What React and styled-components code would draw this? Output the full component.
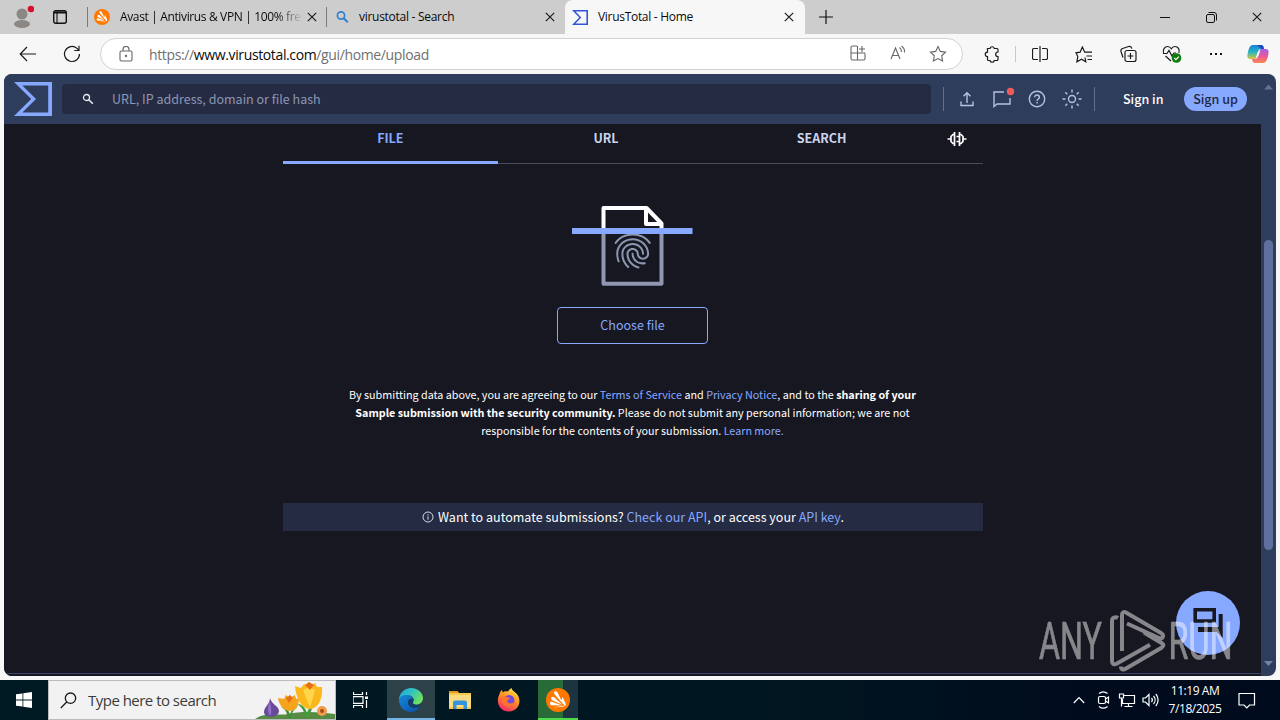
import styled, { createGlobalStyle } from "styled-components";
import { MdFingerprint } from "react-icons/md";

const App = () => {
  return (
    <>
      <GlobalStyle />
      <Desktop>
        <TabStrip />
        <Toolbar />
        <Viewport>
          <Page>
            <SiteHeader />
            <Home />
          </Page>
          <Scrollbar>
            <svg width="15" height="602" viewBox="0 0 15 602">
              <path d="M3 15.500h9L7.500 10.500z" fill="#667190" />
              <rect x="3" y="166" width="9" height="310" rx="4.500" fill="#60709e" />
              <path d="M3 587h9L7.500 592z" fill="#7481a8" />
            </svg>
          </Scrollbar>
          <ChatButton aria-label="Open chat">
            <svg width="32" height="32" viewBox="0 0 32 32">
              <path d="M3.200 2.800h19v11.200h-19z" fill="none" stroke="#181823" strokeWidth="3.600" />
              <path d="M26.700 7h4v24l-6-6H6v-5h20.700z" fill="#181823" />
            </svg>
          </ChatButton>
          <Watermark />
        </Viewport>
        <Taskbar />
      </Desktop>
    </>
  );
};

const AvastIcon = ({ size }) => (
  <svg width={size} height={size} viewBox="0 0 24 24">
    <circle cx="12" cy="12" r="12" fill="#ff7800" />
    <path
      d="M8.300 3.800c1.300-1.100 2.800-.4 3.400 1l5.500 11.400-8.400-9.800c-.8-.9-1.200-1.900-.5-2.600z"
      fill="#fff"
    />
    <path d="M5.400 9.600c.7-1.100 2-1.100 3-.2l8 7.400-9.900-4.300c-1.200-.6-1.700-1.800-1.100-2.900z" fill="#fff" />
    <path
      d="M4 15.200c.2-1.100 1.200-1.600 2.400-1.300l9.800 3.600-10.200-.2c-1.400 0-2.200-.9-2-2.100zM7 19.500l9-.8 2-.4c1.500-.3 2.300-1.600 1.500-3L16.500 9l-1.500 4 3.500 4.500z"
      fill="#fff"
    />
  </svg>
);

const SigmaLogo = ({ width, height, color }) => (
  <svg width={width} height={height} viewBox="0 1.320 24 21.360" preserveAspectRatio="none">
    <path
      d="M10.870 12L0 22.680h24V1.320H0zm10.730 8.520H5.280l8.637-8.448L5.280 3.480H21.600z"
      fill={color}
    />
  </svg>
);

const CloseIcon = () => (
  <svg width="10" height="10" viewBox="0 0 10 10">
    <path d="M.8.800l8.400 8.400M9.200.800L.8 9.200" stroke="#1b1b1b" strokeWidth="1.200" />
  </svg>
);

const TabStrip = () => (
  <Strip>
    <StripButton $width={44}>
      <svg width="24" height="26" viewBox="0 0 24 26">
        <circle cx="12" cy="10" r="5.500" fill="#8b8785" />
        <ellipse cx="12" cy="20" rx="8" ry="4" fill="#8b8785" />
        <circle cx="21" cy="5" r="3.300" fill="#d80f2c" />
      </svg>
    </StripButton>
    <StripButton $width={32}>
      <svg width="14" height="14" viewBox="0 0 14 14">
        <rect x=".7" y=".7" width="12.600" height="12.600" rx="2" fill="none" stroke="#111" strokeWidth="1.400" />
        <path d="M1 2.500h12" stroke="#111" strokeWidth="2" />
        <path d="M4 3v10" stroke="#111" strokeWidth="1.100" />
      </svg>
    </StripButton>
    <StripRule $gap={11} />
    <Tab $width={238} $pad={6} $end={10}>
      <AvastIcon size={16} />
      <TabTitle $fade $space={-0.36}>
        Avast | Antivirus &amp; VPN | 100% fre
      </TabTitle>
      <CloseIcon />
    </Tab>
    <StripRule />
    <Tab $width={238} $pad={8} $end={10}>
      <svg width="16" height="16" viewBox="0 0 16 16">
        <circle cx="6" cy="6.500" r="3.600" fill="none" stroke="#2f80cf" strokeWidth="1.700" />
        <path d="M8.700 9.200l4 4" stroke="#2f80cf" strokeWidth="2" />
      </svg>
      <TabTitle $space={-0.28} $shift={-2}>
        virustotal - Search
      </TabTitle>
      <CloseIcon />
    </Tab>
    <Tab $width={240} $pad={7} $end={11} $active>
      <SigmaLogo width={16} height={15} color="#3155d9" />
      <TabTitle $space={-0.3}>VirusTotal - Home</TabTitle>
      <CloseIcon />
    </Tab>
    <StripButton $width={42}>
      <svg width="14" height="14" viewBox="0 0 14 14">
        <path d="M7 0v14M0 7h14" stroke="#111" strokeWidth="1.200" />
      </svg>
    </StripButton>
    <WindowControls>
      <StripButton $width={46}>
        <svg width="10" height="10" viewBox="0 0 10 10">
          <path d="M0 5.500h10" stroke="#111" />
        </svg>
      </StripButton>
      <StripButton $width={46}>
        <svg width="11" height="11" viewBox="0 0 11 11" fill="none" stroke="#111">
          <rect x=".5" y="2.500" width="8" height="8" rx="1.500" />
          <path d="M2.500.500H8a2.500 2.500 0 0 1 2.500 2.500v5.500" />
        </svg>
      </StripButton>
      <StripButton $width={46}>
        <CloseIcon />
      </StripButton>
    </WindowControls>
  </Strip>
);

const Toolbar = () => (
  <Bar>
    <ToolButton $width={56}>
      <svg width="18" height="16" viewBox="0 0 18 16">
        <path d="M8 1L1.200 8 8 15M1.200 8H17" />
      </svg>
    </ToolButton>
    <ToolButton $width={32}>
      <svg width="18" height="18" viewBox="0 0 18 18">
        <path d="M16.500 9A7.500 7.500 0 1 1 14 3.400L16 5.300M16 .800v4.700h-4.700" />
      </svg>
    </ToolButton>
    <AddressBar>
      <svg width="14" height="16" viewBox="0 0 14 16">
        <rect x="1" y="5" width="12" height="10" rx="1.500" />
        <path d="M4 5V3.500a3 3 0 0 1 6 0V5" />
        <circle cx="7" cy="10" r=".6" fill="#555" />
      </svg>
      <Url>
        https://<b>www.virustotal.com</b>/gui/home/upload
      </Url>
      <AddressIcons>
        <svg width="16" height="16" viewBox="0 0 16 16">
          <path d="M7 1H2.500A1.500 1.500 0 0 0 1 2.500v11A1.500 1.500 0 0 0 2.500 15h11a1.500 1.500 0 0 0 1.500-1.500V8.500M7.500 1v14M1 8h14M12 1v6M9 4h6" />
        </svg>
        <svg width="16" height="16" viewBox="0 0 16 16">
          <path d="M1 14L5.500 3 10 14M2.500 10.500h6M9.500 2.500a5 5 0 0 1 2 4.500M11.500 1a7 7 0 0 1 3 6.500" />
        </svg>
        <svg width="18" height="18" viewBox="0 0 18 18">
          <path d="M9 1.500l2.300 4.900 5.200.7-3.800 3.700.9 5.300L9 13.600l-4.600 2.500.9-5.300L1.500 7.100l5.200-.7z" />
        </svg>
      </AddressIcons>
    </AddressBar>
    <ToolButton $width={58}>
      <svg width="17" height="17" viewBox="0 0 17 17">
        <path d="M3.500 2.500H6a2.200 2.200 0 0 1 4.300 0H13a1 1 0 0 1 1 1V6a2.200 2.200 0 0 0 0 4.700V13.500a1 1 0 0 1-1 1h-2.700a2.200 2.200 0 0 1-4.300 0H4.500a1 1 0 0 1-1-1v-2.800a2.200 2.200 0 0 1 0-4.500z" />
      </svg>
    </ToolButton>
    <ToolRule />
    <ToolButton $width={44}>
      <svg width="16" height="16" viewBox="0 0 16 16">
        <path d="M6 2.500H2A1.500 1.500 0 0 0 .5 4v8A1.500 1.500 0 0 0 2 13.500h4M10 2.500h4A1.500 1.500 0 0 1 15.500 4v8a1.500 1.500 0 0 1-1.500 1.500h-4M8 0v16" />
      </svg>
    </ToolButton>
    <ToolButton $width={44}>
      <svg width="18" height="17" viewBox="0 0 18 17">
        <path d="M10 11.500l.8 4.300-4.300-2.500-4.600 2.500.9-5.300L1 6.800l4.100-.6L7.400 1l2.300 5.200H17M11.500 10H17M12.500 13.500H17" />
      </svg>
    </ToolButton>
    <ToolButton $width={44}>
      <svg width="18" height="18" viewBox="0 0 18 18">
        <rect x="6" y="5.500" width="11" height="11" rx="2" />
        <path d="M11.500 8v6M8.500 11h6M4 12.500L2 6.500a2.500 2.500 0 0 1 1.600-3l6-2a2.500 2.500 0 0 1 3 1.500l.2.600" />
      </svg>
    </ToolButton>
    <ToolButton $width={44}>
      <svg width="20" height="18" viewBox="0 0 20 18">
        <path d="M1.500 8C.5 4.500 3 1.500 5.500 1.500c2 0 3 1 3.800 2.300C10 2.500 11.300 1.500 13 1.500c3 0 5 3 3.900 6.500M1 8.500h4l2-3 3 5.500 2-3h2M3.500 11L9 16" />
        <circle cx="14.500" cy="13" r="4.800" fill="#107c10" stroke="none" />
        <path d="M12.300 13l1.600 1.600 3-3" stroke="#fff" />
      </svg>
    </ToolButton>
    <ToolButton $width={44}>
      <svg width="14" height="4" viewBox="0 0 14 4">
        <path d="M1 1h2v2H1zM6 1h2v2H6zM11 1h2v2h-2z" fill="#111" stroke="none" />
      </svg>
    </ToolButton>
    <ToolButton $width={40}>
      <svg width="22" height="20" viewBox="0 0 22 20">
        <defs>
          <linearGradient id="cpA" x1="0" y1="0" x2="0" y2="1">
            <stop offset="0" stopColor="#1f7fdd" />
            <stop offset=".5" stopColor="#25b4c4" />
            <stop offset="1" stopColor="#d9c63b" />
          </linearGradient>
          <linearGradient id="cpB" x1="0" y1="0" x2="0" y2="1">
            <stop offset="0" stopColor="#a45fe8" />
            <stop offset=".5" stopColor="#e9569b" />
            <stop offset="1" stopColor="#f88a4d" />
          </linearGradient>
        </defs>
        <path d="M6 1h8c2 0 2.500 1.500 3 4h-3c-2 0-2.500 1-3 3l-1.500 5C9 15 8 15 6 15H3c-3 0-3-3-2-7 1-4 2-7 5-7z" fill="url(#cpA)" stroke="none" />
        <path d="M16 19H8c-2 0-2.500-1.500-3-4h3c2 0 2.500-1 3-3l1.500-5C13 5 14 5 16 5h3c3 0 3 3 2 7-1 4-2 7-5 7z" fill="url(#cpB)" stroke="none" />
        <path d="M10 1h4c2 0 2.500 1.500 3 4h-3z" fill="#1a4fbf" stroke="none" />
        <path d="M10.800 8l2.500-1-2.100 5.500-2.200.5z" fill="#f7f7f7" stroke="none" />
      </svg>
    </ToolButton>
  </Bar>
);

const SiteHeader = () => (
  <Header>
    <SigmaLogo width={38} height={34} color="#87a8ff" />
    <SearchBox>
      <svg width="12" height="12" viewBox="0 0 12 12">
        <circle cx="4.500" cy="4.500" r="3" fill="none" stroke="#e8ebf5" strokeWidth="1.300" />
        <path d="M6.800 6.800l4 4" stroke="#e8ebf5" strokeWidth="1.600" />
      </svg>
      <span>URL, IP address, domain or file hash</span>
    </SearchBox>
    <HeaderRule />
    <HeaderIcons>
      <svg width="20" height="20" viewBox="0 0 20 20">
        <path d="M4 12.500V16.500h12V12.500M10 14V4M6.500 7.300L10 3.800l3.500 3.500" />
      </svg>
      <svg width="20" height="20" viewBox="0 0 20 20">
        <path d="M12 3H2v14.500L5 15h13V9" />
        <circle cx="18.500" cy="2.500" r="3.700" fill="#ef5a5a" stroke="none" />
      </svg>
      <svg width="20" height="20" viewBox="0 0 20 20">
        <circle cx="10" cy="10" r="7.700" />
        <path d="M7.700 8.200c0-3 4.700-2.900 4.700 0 0 1.800-2.300 1.900-2.300 3.800M10.100 13v1.600" />
      </svg>
      <svg width="20" height="20" viewBox="0 0 20 20">
        <circle cx="10" cy="10" r="3.500" />
        <path d="M10 .500v3M10 16.500v3M.5 10h3M16.500 10h3M3.300 3.300l2 2M14.700 14.700l2 2M3.300 16.700l2-2M14.700 5.300l2-2" />
      </svg>
    </HeaderIcons>
    <HeaderRule />
    <SignIn>Sign in</SignIn>
    <SignUp>Sign up</SignUp>
  </Header>
);

const Home = () => (
  <Main>
    <Column>
      <Nav>
        <NavItem $active>FILE</NavItem>
        <NavItem>URL</NavItem>
        <NavItem>SEARCH</NavItem>
        <NavExtra>
          <svg width="20" height="16" viewBox="0 0 20 16">
            <path
              d="M7.500 1v14M12.500 1v14M7.500 3.500H6L4 5.500v5l2 2h1.500M12.500 3.500H14L16 5.500v5l-2 2h-1.500M.5 8H4M16 8h3.500M9.500 5.500h3M9.500 10.500h3"
              fill="none"
              stroke="#fff"
              strokeWidth="1.700"
            />
          </svg>
        </NavExtra>
      </Nav>
      <FileArt>
        <svg width="121" height="80" viewBox="0 0 121 80" fill="none" strokeLinejoin="round" strokeWidth="4">
          <path d="M31.500 25v52.800H89.500V25" stroke="#8f98b0" />
          <path d="M31.500 25V2h43l15 15.500V25" stroke="#fff" />
          <path d="M74 3v15h14" stroke="#fff" />
          <g transform="translate(36.700 18.500)" color="#8c96b0">
            <MdFingerprint size={48} strokeWidth={0} />
          </g>
          <path d="M0 22h120.500v6H0z" fill="#87a8ff" />
        </svg>
      </FileArt>
      <ChooseButton>Choose file</ChooseButton>
      <Terms>
        By submitting data above, you are agreeing to our <a>Terms of Service</a> and{" "}
        <a>Privacy Notice</a>, and to the <b>sharing of your</b>
        <br />
        <b>Sample submission with the security community.</b> Please do not submit any personal
        information; we are not
        <br />
        responsible for the contents of your submission. <a>Learn more.</a>
      </Terms>
      <ApiNote>
        <svg width="12" height="12" viewBox="0 0 12 12" fill="none" stroke="#d5daea">
          <circle cx="6" cy="6" r="5" />
          <path d="M6 5.300v3.400M6 3.200v1.200" />
        </svg>
        <p>
          Want to automate submissions? <a>Check our API</a>, or access your <a>API key</a>.
        </p>
      </ApiNote>
    </Column>
    <FooterLine />
  </Main>
);

const Watermark = () => (
  <Stamp>
    <svg width="236" height="66" viewBox="0 0 236 66">
      <text x="1" y="49" textLength="63" lengthAdjust="spacingAndGlyphs">
        ANY
      </text>
      <text x="130.500" y="49" textLength="64" lengthAdjust="spacingAndGlyphs">
        RUN
      </text>
      <path
        d="M80 8c-2.500-1.500-6-.5-6 3v40c0 3 2 4 4.500 2.700l33.500-19M84 41V5c0-3 2-3.500 4-2.500L123 23c3.500 2 2 6-1.500 5.300L89 13.500M106 22.500l17.500 10.500c2.500 1.500 2.500 3.200 0 4.700L88 58.500c-3 1.800-5 1-5-2"
        fill="none"
        stroke="#fff"
        strokeWidth="4"
      />
    </svg>
  </Stamp>
);

const Taskbar = () => (
  <TaskRow>
    <TaskCell $width={48}>
      <svg width="16" height="16" viewBox="0 0 16 16" fill="#fff">
        <path d="M0 2.300L6.500 1.400v6.200H0zM7.300 1.300L16 0v7.600H7.300zM0 8.400h6.500v6.200L0 13.700zM7.300 8.400H16V16l-8.700-1.300z" />
      </svg>
    </TaskCell>
    <TaskSearch>
      <svg width="17" height="17" viewBox="0 0 17 17" fill="none" stroke="#1a1a1a" strokeWidth="1.300">
        <circle cx="10.500" cy="6.200" r="5.200" />
        <path d="M6.700 10L.8 16" />
      </svg>
      <span>Type here to search</span>
      <Flowers />
    </TaskSearch>
    <TaskCell $width={51}>
      <svg width="18" height="16" viewBox="1.500 0 18 16" fill="none" stroke="#fff" strokeWidth="1.200">
        <path d="M2 0v2.500h9V0M2 16v-2.500h9V16M1.500 4.600h10v6.800h-10zM15 0v3M15 8v8" />
        <path d="M13.500 4.500h3v2.500h-3z" fill="#fff" stroke="none" />
      </svg>
    </TaskCell>
    <TaskCell $width={48} $back="#2c4148" $line="#76b4e8">
      <svg width="24" height="24" viewBox="0 0 24 24">
        <defs>
          <linearGradient id="edgeTop" x1="0" y1="0" x2="1" y2=".5">
            <stop offset="0" stopColor="#22a6e4" />
            <stop offset=".5" stopColor="#2fc1c4" />
            <stop offset="1" stopColor="#6ee063" />
          </linearGradient>
          <linearGradient id="edgeLow" x1="0" y1="0" x2="1" y2="1">
            <stop offset="0" stopColor="#1589d9" />
            <stop offset="1" stopColor="#0c4fa6" />
          </linearGradient>
        </defs>
        <path d="M0 12C0 5 5.500 0 12 0s12 4.500 12 10c0 4-3 6.500-6.500 6.500-3 0-4-1.200-3.400-2.300 1.700-2.400.4-6.200-4-6.700C5.500 7.300 1.500 9 0 12z" fill="url(#edgeTop)" />
        <path d="M0 12C.5 8.500 4.500 6.500 8.500 7c3 .4 5 2 5.500 4-3-1-5 1-5 3.500 0 4 5.500 7.500 12 4C19 21.500 16 24 12 24 5 24 0 18.500 0 12z" fill="url(#edgeLow)" />
        <path d="M9 14.500c0-2.500 2-4.500 5-3.500.5 1.500 0 2.800-.5 3.800-.4 2 5 3.500 8.500 1.200-1 2.500-3.500 4-6.500 4-3.500 0-6.500-2.500-6.500-5.500z" fill="#103f70" />
      </svg>
    </TaskCell>
    <TaskCell $width={49}>
      <svg width="22" height="20" viewBox="0 0 22 20">
        <path d="M0 1h8l2 2h12v16H0z" fill="#f8c94c" />
        <path d="M0 1h8l2 2H0z" fill="#e49b1e" />
        <path d="M0 5h22v12H0z" fill="#fbdb82" />
        <path d="M4 19v-6.500A2 2 0 0 1 6 10.500h10a2 2 0 0 1 2 2V19h-3.500v-4h-7v4z" fill="#3594dc" />
      </svg>
    </TaskCell>
    <TaskCell $width={49}>
      <svg width="24" height="24" viewBox="0 0 24 24">
        <defs>
          <linearGradient id="fox" x1=".8" y1="0" x2=".3" y2="1">
            <stop offset="0" stopColor="#ffe94a" />
            <stop offset=".45" stopColor="#ff9422" />
            <stop offset="1" stopColor="#f5286d" />
          </linearGradient>
        </defs>
        <path d="M2.500 6C3 4 4 2.500 5 2l.8 2.500C7 3.500 9 3 11 3.500 12 2 13 .8 14.500 0c.5 2.500 3 3.500 5 5.500 6 6.500 2.500 18-7.500 18C3 23.500-2 14.500 2.500 6z" fill="url(#fox)" />
        <circle cx="12" cy="12.500" r="5.500" fill="#7549dc" />
        <path d="M5 8.500c2-1.200 4-.5 5.200.7l3 .8c-.5 1.500-2 1.500-3 2.500 0 3 4 4 7 1.500-1 4-4 5-6.500 4.500C6.500 18 4 13.500 5 8.500z" fill="#ff752e" />
      </svg>
    </TaskCell>
    <AvastCell>
      <AvastIcon size={24} />
    </AvastCell>
    <Tray>
      <svg width="18" height="8" viewBox="-1 0 18 8">
        <path d="M.8 7L6 1.500 11.200 7" />
      </svg>
      <svg width="16" height="18" viewBox="0 0 16 18">
        <rect x="2.500" y="5.500" width="7" height="7" rx="1.500" />
        <path d="M9.500 8l3-2v6l-3-2M3 2.500c2.500-2 6-2 8.500 0M3 15.500c2.500 2 6 2 8.500 0" />
      </svg>
      <svg width="18" height="16" viewBox="0 0 18 16">
        <path d="M5 3.500h11.500v8H4.500V7M1.500 2h4v4h-4zM10.500 11.500v3M6.500 14.500h8M3.500 6v8.500" />
      </svg>
      <svg width="18" height="14" viewBox="0 0 18 14">
        <path d="M1 5h2.500L7 1.500v11L3.500 9H1zM9.500 5a3 3 0 0 1 0 4M11.500 3a6 6 0 0 1 0 8M13.800 1a9 9 0 0 1 0 12" />
      </svg>
      <Clock>
        <span>11:19 AM</span>
        <span>7/18/2025</span>
      </Clock>
      <svg width="18" height="17" viewBox="0 0 18 17">
        <path d="M1 1.500h15.500v11.500H11.500L8.800 15.800 6 13H1z" />
      </svg>
    </Tray>
  </TaskRow>
);

const Flowers = () => (
  <svg width="80" height="38" viewBox="0 0 80 38">
    <path d="M0 38c12-8 24-3 33-5 14-3 30-2 47 0v5z" fill="#568b43" />
    <path d="M15 17c1 6 9 8 9 13 0 7-15 8-15 1 0-5 6-8 6-14z" fill="#684a9b" />
    <path d="M15 19c0 6 3 11 0 16-3-5-2-9 0-16z" fill="#9171c4" />
    <path d="M33 37c-1-6-3-9-7-11 5 0 8 3 9 8 1-5 4-8 7-8-4 3-6 7-6 11z" fill="#3f8c3b" />
    <path d="M50 36c-1-7-4-11-8-13 6 0 9 5 10 9 2-6 5-9 10-10-5 4-7 9-7 14z" fill="#479b3d" />
    <path d="M23 17l6 1 2-4 4 3 5-3 1 4 3-1c0 8-3 13-9 13s-11-6-12-13z" fill="#f4a51d" />
    <path d="M40 5l6 2 3-4 5 3 6-4 2 4 5 0c1 12-4 22-12 22S41 18 40 5z" fill="#fbb81d" />
    <path d="M48 9l6-3 6 3-5 18z" fill="#ffd64a" />
    <path d="M50 4l4-3 5 3-4 5zM31 17l4-3 3 3-4 5z" fill="#e86f17" />
    <circle cx="67" cy="30" r="5" fill="#f19b4b" />
    <circle cx="67" cy="30" r="2" fill="#a84a1b" />
  </svg>
);

const GlobalStyle = createGlobalStyle`
  * {
    box-sizing: border-box;
  }

  body {
    margin: 0;
    overflow: hidden;
    font-family: "Open Sans", "Noto Sans", sans-serif;
  }

  svg {
    display: block;
    flex: none;
  }

  p {
    margin: 0;
  }

  button {
    font: inherit;
    border: 0;
    padding: 0;
    background: none;
  }
`;

const Desktop = styled.div`
  width: 1280px;
  height: 720px;
  display: flex;
  flex-direction: column;
  background: #f7f7f7;
`;

const Strip = styled.div`
  height: 34px;
  display: flex;
  align-items: center;
  background: #cdcdcd;
`;

const StripButton = styled.button`
  width: ${({ $width }) => $width}px;
  height: 34px;
  display: flex;
  align-items: center;
  justify-content: center;
`;

const StripRule = styled.span`
  width: 1px;
  height: 20px;
  margin-left: ${({ $gap = 0 }) => $gap}px;
  background: #7c7c7c;
`;

const Tab = styled.div`
  width: ${({ $width }) => $width}px;
  height: 34px;
  display: flex;
  align-items: center;
  gap: 10px;
  padding: 0 ${({ $end }) => $end}px 0 ${({ $pad }) => $pad}px;
  border-radius: 8px 8px 0 0;
  background: ${({ $active }) => ($active ? "#f7f7f7" : "transparent")};
`;

const TabTitle = styled.span`
  flex: 1;
  white-space: nowrap;
  margin-left: ${({ $shift = 0 }) => $shift}px;
  margin-right: -4px;
  padding-bottom: 1px;
  color: #0a0a0a;
  font-size: 12px;
  letter-spacing: ${({ $space }) => $space}px;
  mask-image: ${({ $fade }) =>
    $fade ? "linear-gradient(90deg, #000 87%, transparent 101%)" : "none"};
`;

const WindowControls = styled.div`
  margin-left: auto;
  display: flex;
`;

const Bar = styled.div`
  height: 40px;
  display: flex;
  align-items: center;
  background: #f7f7f7;
`;

const ToolButton = styled.button`
  width: ${({ $width }) => $width}px;
  height: 32px;
  display: flex;
  align-items: center;
  justify-content: center;

  svg {
    fill: none;
    stroke: #1b1b1b;
    stroke-width: 1.2;
  }
`;

const AddressBar = styled.div`
  width: 863px;
  height: 32px;
  margin-left: 12px;
  padding: 0 15px 0 18px;
  display: flex;
  align-items: center;
  gap: 16px;
  border: 1px solid #d2d2d6;
  border-radius: 16px;
  background: #fff;

  svg {
    fill: none;
    stroke: #666;
    stroke-width: 1.1;
  }
`;

const Url = styled.span`
  font-size: 14px;
  letter-spacing: -0.37px;
  color: #707070;

  b {
    font-weight: 400;
    color: #0a0a0a;
  }
`;

const AddressIcons = styled.div`
  margin-left: auto;
  display: flex;
  gap: 23.5px;
`;

const ToolRule = styled.span`
  width: 1px;
  height: 16px;
  margin: 0 2px 0 -6px;
  background: #c8c8c8;
`;

const Viewport = styled.div`
  position: relative;
  height: 602px;
  margin: 0 4px 4px;
  display: flex;
  border-radius: 8px;
  overflow: hidden;
  background: #2f3d5c;
  font-family: "Noto Sans CJK SC", "Noto Sans", sans-serif;
  font-size: 12.53px;
`;

const Page = styled.div`
  width: 1257px;
  display: flex;
  flex-direction: column;
`;

const Scrollbar = styled.div`
  width: 15px;
`;

const Header = styled.header`
  height: 50px;
  display: flex;
  align-items: center;
  padding-left: 10px;
  background: #2f3d5c;
`;

const SearchBox = styled.div`
  width: 869px;
  height: 30px;
  margin: 0 12px 0 10px;
  padding-left: 20px;
  display: flex;
  align-items: center;
  gap: 18px;
  border-radius: 4px;
  background: #252b42;
  color: #8c97b4;

  span {
    padding-bottom: 1px;
  }
`;

const HeaderRule = styled.span`
  width: 1px;
  height: 24px;
  background: #61708f;
`;

const HeaderIcons = styled.div`
  display: flex;
  gap: 15px;
  padding: 0 12.5px;

  svg {
    overflow: visible;
    fill: none;
    stroke: #b6c2dd;
    stroke-width: 1.4;
  }
`;

const SignIn = styled.button`
  margin-left: 28px;
  width: 40px;
  padding-bottom: 2px;
  white-space: nowrap;
  color: #fff;
  font-weight: 500;
`;

const SignUp = styled.button`
  width: 63px;
  height: 24px;
  margin-left: 21px;
  border-radius: 12px;
  background: #87a8ff;
  color: #20283f;
  font-weight: 500;
  line-height: 24px;
`;

const Main = styled.main`
  flex: 1;
  display: flex;
  flex-direction: column;
  background: #171722;
`;

const Column = styled.div`
  width: 700px;
  margin-left: 279px;
  display: flex;
  flex-direction: column;
  align-items: center;
`;

const Nav = styled.nav`
  width: 700px;
  height: 40px;
  display: flex;
  border-bottom: 1px solid #484b5c;
`;

const NavItem = styled.div`
  flex: 1;
  height: 40px;
  padding: 4px 0 0 ${({ $active }) => ($active ? 0 : 1)}px;
  border-bottom: 3px solid ${({ $active }) => ($active ? "#87a8ff" : "transparent")};
  color: ${({ $active }) => ($active ? "#87a8ff" : "#ccd5eb")};
  text-align: center;
  font-weight: 700;
  line-height: 20px;
`;

const NavExtra = styled.div`
  width: 54px;
  padding: 7px 0 0 17.5px;
`;

const FileArt = styled.div`
  margin: 42px 1px 0 0;
`;

const ChooseButton = styled.button`
  width: 151px;
  height: 37px;
  margin: 21px 1px 0 0;
  padding-bottom: 2px;
  border: 1px solid #87a8ff;
  border-radius: 4px;
  color: #87a8ff;
`;

const Terms = styled.p`
  margin: 42px 1px 0 0;
  color: #fff;
  font-size: 10.76px;
  line-height: 18px;
  text-align: center;
  white-space: nowrap;

  a {
    color: #87a8ff;
  }
`;

const ApiNote = styled.div`
  width: 700px;
  height: 28px;
  margin-top: 63px;
  display: flex;
  align-items: center;
  justify-content: center;
  gap: 4px;
  background: #252b42;
  color: #fff;
  line-height: 20px;

  a {
    color: #87a8ff;
  }
`;

const FooterLine = styled.div`
  height: 1px;
  margin: auto 0 2px;
  background: #3a456b;
`;

const ChatButton = styled.button`
  position: absolute;
  right: 36px;
  bottom: 21px;
  width: 64px;
  height: 64px;
  display: flex;
  align-items: center;
  justify-content: center;
  border-radius: 50%;
  background: #87a8ff;
`;

const Stamp = styled.div`
  position: absolute;
  left: 1034px;
  bottom: 0;
  opacity: 0.48;

  text {
    fill: #fff;
    stroke: #fff;
    stroke-width: 0.7px;
    font-family: Roboto, sans-serif;
    font-size: 52px;
    font-weight: 400;
  }
`;

const TaskRow = styled.footer`
  height: 40px;
  display: flex;
  background: linear-gradient(90deg, #001a24 0%, #001620 60%, #000c1e 85%);
`;

const TaskCell = styled.div`
  width: ${({ $width }) => $width}px;
  height: 40px;
  display: flex;
  align-items: center;
  justify-content: center;
  background: ${({ $back = "transparent" }) => $back};
  box-shadow: inset 0 -2px ${({ $line = "transparent" }) => $line};
`;

const AvastCell = styled(TaskCell)`
  width: 40px;
  margin-left: 5px;
  background: linear-gradient(90deg, #286b39 25px, #1b3440 25px);
  box-shadow: inset 0 -2px #4edb4a;
`;

const TaskSearch = styled.div`
  width: 288px;
  height: 40px;
  padding-left: 11px;
  display: flex;
  align-items: center;
  gap: 11px;
  border: 1px solid #bdbdbd;
  background: #f2f2f2;
  color: #3b3b3b;
  font-size: 15px;
  letter-spacing: -0.52px;
  overflow: hidden;

  > :last-child {
    margin-left: auto;
  }
`;

const Tray = styled.div`
  margin-left: auto;
  padding-right: 24px;
  display: flex;
  align-items: center;
  gap: 6px;
  color: #fff;

  svg {
    fill: none;
    stroke: #fff;
    stroke-width: 1.2;
  }
`;

const Clock = styled.div`
  width: 58px;
  margin-right: 8px;
  display: flex;
  flex-direction: column;
  align-items: center;
  white-space: nowrap;
  font-size: 12px;
  line-height: 18px;
  letter-spacing: -0.45px;
`;

export default App;
